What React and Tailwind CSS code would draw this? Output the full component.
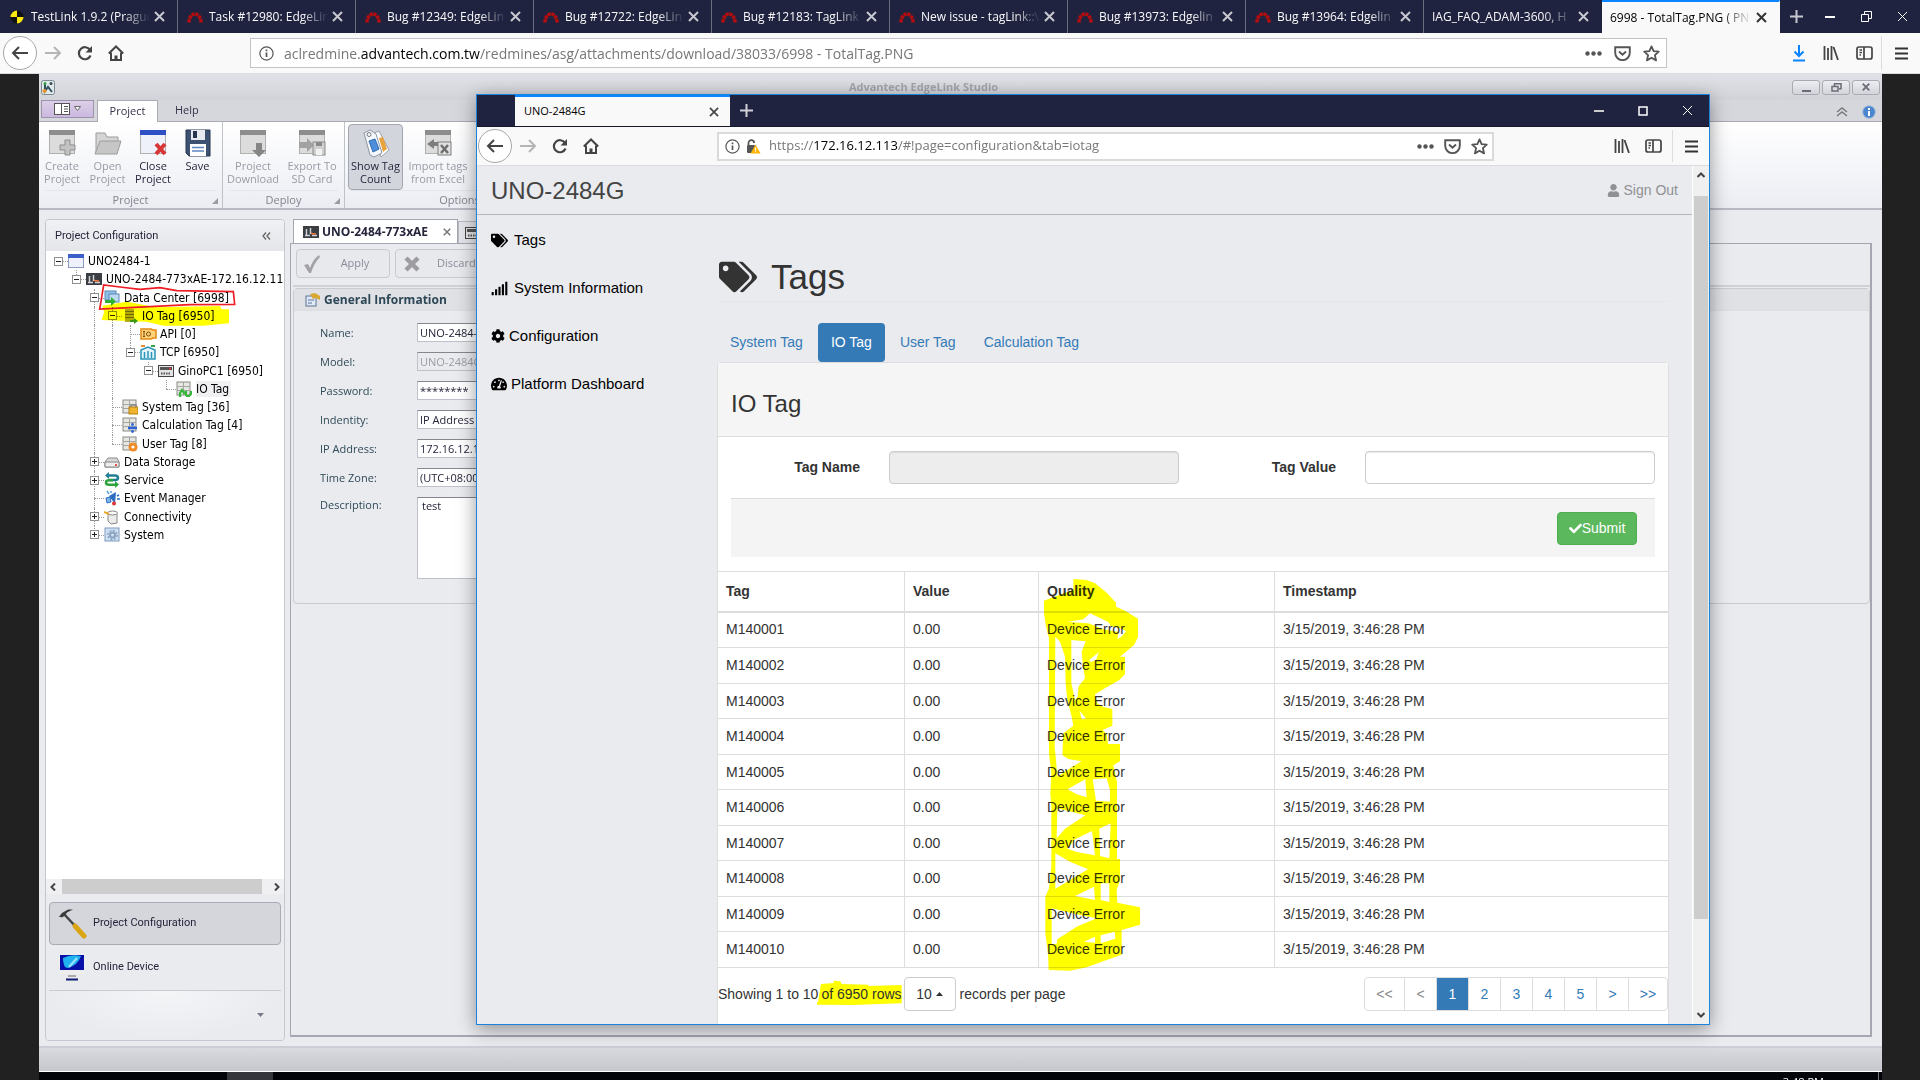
import { FaTags, FaSignal, FaCog, FaTachometerAlt, FaCheck, FaUser } from "react-icons/fa";

const WEB = "font-['Liberation_Sans',Arial,sans-serif]";
const SYS = "font-['Open_Sans','Noto_Sans',sans-serif]";
const PANEL = "font-['Roboto','Noto_Sans',sans-serif]";
const TREE = "font-['DejaVu_Sans_Condensed','DejaVu_Sans',sans-serif]";

/* ---------- browser chrome icons ---------- */
const Close = ({ s = 11, w = 2 }) => (
  <svg width={s} height={s} viewBox="0 0 11 11" fill="none" stroke="currentColor" strokeWidth={w}><path d="M1 1l9 9M10 1l-9 9" /></svg>
);
const Plus = () => (
  <svg width="15" height="15" viewBox="0 0 15 15" stroke="currentColor" strokeWidth="2"><path d="M7.5 1v13M1 7.5h13" /></svg>
);
const Redmine = () => (
  <svg width="16" height="12" viewBox="0 0 16 12" fill="none" stroke="#b80d0d" strokeWidth="3.500"><path d="M2 11.500a6 8.500 0 0 1 12 0" strokeDasharray="3.2 0.7" /></svg>
);
const Testlink = () => (
  <svg width="14" height="14" viewBox="0 0 14 14"><circle cx="7" cy="7" r="6.500" fill="#111" /><path d="M7 .5A6.500 6.500 0 0 0 .5 7H7zM7 13.500A6.500 6.500 0 0 0 13.500 7H7z" fill="#fde910" /></svg>
);
const Arrow = ({ flip }) => (
  <svg width="18" height="16" viewBox="0 0 18 16" fill="none" stroke="currentColor" strokeWidth="2" className={flip ? "rotate-180" : ""}><path d="M17 8H2M8 2L2 8l6 6" /></svg>
);
const Reload = () => (
  <svg width="16" height="16" viewBox="0 0 16 16" fill="none" stroke="currentColor" strokeWidth="2.200"><path d="M13.500 10.500A6 6 0 1 1 13 5" /><path d="M15 1v6.500H8.500z" fill="currentColor" stroke="none" /></svg>
);
const Home = () => (
  <svg width="16" height="16" viewBox="0 0 16 16" fill="none" stroke="currentColor" strokeWidth="2"><path d="M.8 8.500L8 1.500l7.200 7" /><path d="M3 7.500V15h10V7.500" /><path d="M8 15v-4.500" strokeWidth="3" /></svg>
);
const Info = () => (
  <svg width="15" height="15" viewBox="0 0 15 15" fill="none" stroke="currentColor" strokeWidth="1.200"><circle cx="7.500" cy="7.500" r="6.600" /><path d="M7.500 6.500v4.500M7.500 3.600v1.700" strokeWidth="1.700" /></svg>
);
const LockWarn = () => (
  <svg width="15" height="15" viewBox="0 0 15 15"><path d="M2.500 6V4a2.800 2.800 0 0 1 5.600 0" fill="none" stroke="#555" strokeWidth="1.800" /><rect x="1" y="6" width="8" height="8" rx="1" fill="#555" /><path d="M9.500 5.500l5 9h-10z" fill="#ffb300" /><path d="M9.500 8.500v3M9.500 12.200v1" stroke="#fff" strokeWidth="1.200" /></svg>
);
const Dots = () => (
  <svg width="17" height="5" viewBox="0 0 17 5" fill="currentColor"><circle cx="2.500" cy="2.500" r="2.200" /><circle cx="8.500" cy="2.500" r="2.200" /><circle cx="14.500" cy="2.500" r="2.200" /></svg>
);
const Pocket = () => (
  <svg width="17" height="15" viewBox="0 0 17 15" fill="none" stroke="currentColor" strokeWidth="1.900"><path d="M1.200 1.200h14.600v5.600a7.300 7.300 0 0 1-14.600 0z" /><path d="M5 5.500l3.500 3.300L12 5.500" /></svg>
);
const Star = () => (
  <svg width="17" height="17" viewBox="0 0 17 17" fill="none" stroke="currentColor" strokeWidth="1.800" strokeLinejoin="round"><path d="M8.500 1.400l2.100 4.800 5.200.5-3.900 3.500 1.200 5.200-4.600-2.700-4.600 2.700 1.200-5.200L1.200 6.700l5.200-.5z" /></svg>
);
const Library = () => (
  <svg width="16" height="14" viewBox="0 0 16 14" stroke="currentColor" strokeWidth="1.800"><path d="M1.500 0v14M5 2v12M8.500 0v14M10.500 1l4.500 13" /></svg>
);
const Sidebar = () => (
  <svg width="17" height="14" viewBox="0 0 17 14" fill="none" stroke="currentColor" strokeWidth="1.700"><rect x="1" y="1" width="15" height="12" rx="2" /><path d="M8 1v12M3.500 4h2.500M3.500 6.500h2.500M3.500 9h1.500" /></svg>
);
const Menu = () => (
  <svg width="13" height="13" viewBox="0 0 13 13" stroke="currentColor" strokeWidth="2"><path d="M0 1.500h13M0 6.500h13M0 11.500h13" /></svg>
);
const Download = () => (
  <svg width="14" height="17" viewBox="0 0 14 17" fill="none" stroke="#0a84ff" strokeWidth="2"><path d="M7 0v11M2.500 6.500L7 11l4.500-4.500M1 15.500h12" /></svg>
);

function IconButton({ label, className, children }) {
  return <button type="button" aria-label={label} className={`flex items-center justify-center ${className}`}>{children}</button>;
}

const TABS = ["TestLink 1.9.2 (Prague", "Task #12980: EdgeLin", "Bug #12349: EdgeLin", "Bug #12722: EdgeLin", "Bug #12183: TagLink", "New issue - tagLink::V", "Bug #13973: Edgelin", "Bug #13964: Edgelin", "IAG_FAQ_ADAM-3600, H", "6998 - TotalTag.PNG ( PN"];

function OuterTabs() {
  return (
    <div className="flex h-[33px] shrink-0 items-stretch bg-[#202340] text-[#f9f9fa]">
      {TABS.map((t, i) => {
        const active = i === TABS.length - 1;
        return (
          <div key={t} className={`flex w-[178px] shrink-0 items-center border-r pr-3 ${active ? "border-t-2 border-t-[#0a84ff] border-r-transparent bg-[#f9f9fa] pl-2 text-black" : i === TABS.length - 2 ? "border-r-transparent pl-2" : "border-r-[#6b6d80] pl-[7px]"}`}>
            {i < 8 && <span className="mr-1 flex w-5 shrink-0 justify-center">{i === 0 ? <Testlink /> : <Redmine />}</span>}
            <a href="#tab" className="min-w-0 flex-1 overflow-hidden text-[12px] leading-5 whitespace-nowrap [mask-image:linear-gradient(to_right,black_78%,transparent)]">{t}</a>
            <IconButton label="Close tab" className={`ml-1 ${active ? "text-[#333]" : "text-[#c8c8d0]"}`}><Close /></IconButton>
          </div>
        );
      })}
      <IconButton label="New tab" className="w-8 text-[#c8c8d0]"><Plus /></IconButton>
      <div className="ml-auto flex">
        <IconButton label="Minimize" className="w-9"><svg width="10" height="2"><path d="M0 1h10" stroke="#fff" strokeWidth="2" /></svg></IconButton>
        <IconButton label="Restore" className="w-9"><svg width="11" height="11" fill="none" stroke="#fff"><path d="M.5 3.500h7v7h-7zM3.500 3V.5h7v7H8" /></svg></IconButton>
        <IconButton label="Close" className="w-9"><Close s={11} w={1} /></IconButton>
      </div>
    </div>
  );
}

function NavButtons({ gap }) {
  return (
    <div className={`flex items-center text-[#444] ${gap}`}>
      <IconButton label="Back" className="h-[34px] w-[34px] rounded-full border border-[#a8a8a8] bg-white"><Arrow /></IconButton>
      <IconButton label="Forward" className="w-8 text-[#b5b5b5]"><Arrow flip /></IconButton>
      <IconButton label="Reload" className="w-[31px]"><Reload /></IconButton>
      <IconButton label="Home" className="w-[31px]"><Home /></IconButton>
    </div>
  );
}

function OuterNav() {
  return (
    <div className="flex h-[41px] shrink-0 items-center border-b border-[#dcdce0] bg-[#f9f9fa] pl-[3px] text-[#555]">
      <NavButtons gap="w-[247px]" />
      <div className="flex h-[30px] flex-1 items-center border border-[#c4c4c4] bg-white pr-1.5 pl-2">
        <Info />
        <a href="#url" className="ml-2.5 flex-1 text-[14px] text-[#777] whitespace-nowrap">aclredmine.<span className="text-black">advantech.com.tw</span>/redmines/asg/attachments/download/38033/6998 - TotalTag.PNG</a>
        <div className="flex items-center gap-3"><Dots /><Pocket /><Star /></div>
      </div>
      <div className="ml-[125px] flex items-center gap-[17px] text-[#444]"><Download /><Library /><Sidebar /></div>
      <div className="ml-2 flex h-[34px] w-[39px] items-center justify-center border-l border-[#ddd] text-[#333]"><Menu /></div>
    </div>
  );
}

/* ---------- ribbon icons ---------- */
const Win = ({ head = "#8d8d8d", body = "#dcdcdc", children }) => (
  <svg width="28" height="28" viewBox="0 0 28 28"><rect x="1.500" y="1.500" width="25" height="23" fill={body} stroke="#b0b0b0" /><rect x="1" y="1" width="26" height="5" fill={head} />{children}</svg>
);
const RIBBON = {
  create: <Win><path d="M17 11h5v5h5v5h-5v5h-5v-5h-5v-5h5z" fill="#c2c2c2" stroke="#8d8d8d" /></Win>,
  open: <svg width="28" height="28" viewBox="0 0 28 28"><path d="M2 24V4h9l2 4h11v5" fill="#d5d5d5" stroke="#9c9c9c" /><path d="M1 25l5-13h21l-4 13z" fill="#c6c6c6" stroke="#9c9c9c" /></svg>,
  close: <Win head="#2f4fc4" body="#eef1fa"><path d="M17 15l9 10M26 15l-9 10" stroke="#d93636" strokeWidth="4" /></Win>,
  save: <svg width="28" height="28" viewBox="0 0 28 28"><path d="M2 1h24v26H5l-3-3z" fill="#3d5273" stroke="#24344f" /><rect x="7" y="1" width="14" height="10" fill="#e6eaf0" /><rect x="9" y="2" width="4" height="7" fill="#26344d" /><rect x="6" y="15" width="16" height="12" fill="#fff" /><path d="M8 18.500h12M8 22h12" stroke="#5c86c0" strokeWidth="1.500" /></svg>,
  download: <Win><path d="M17 14h6v7h4l-7 7-7-7h4z" fill="#858585" /></Win>,
  exportSd: <Win><path d="M1 13h8V9l7 7-7 7v-4H1z" fill="#a2a2a2" /><rect x="15" y="13" width="12" height="13" fill="#d0d0d0" stroke="#8a8a8a" /><rect x="18" y="13" width="6" height="4" fill="#8a8a8a" /><rect x="18" y="20" width="6" height="6" fill="#f2f2f2" /></Win>,
  tag: <svg width="28" height="30" viewBox="0 0 28 30"><path d="M12 4l5-2 10 19-8 7z" fill="#fff" stroke="#9aa0aa" /><path d="M17 9l4-1 4 12-4 3z" fill="#eaa33c" /><path d="M2 4l6-3 6 4 6 19-8 4-4-2z" fill="#f4f7fb" stroke="#8b96a5" /><circle cx="7" cy="5.500" r="2" fill="none" stroke="#777" /><path d="M7 12l6-2 4 10-6 3z" fill="#4b8fdc" stroke="#2f69b0" /></svg>,
  excel: <Win><path d="M10 10v3h4v4h-4v3l-7-5z" fill="#7d7d7d" /><rect x="14" y="13" width="13" height="13" fill="#e0e0e0" stroke="#7d7d7d" /><path d="M17 16l7 8M24 16l-7 8" stroke="#6d6d6d" strokeWidth="2.500" /></Win>,
};

function RibbonItem({ icon, lines, off, pressed, w }) {
  return (
    <button type="button" className={`flex h-[66px] flex-col items-center pt-1 text-center text-[11px] leading-[13px] whitespace-nowrap ${w} ${off ? "text-[#9a9ba6]" : "text-[#25253c]"} ${pressed ? "rounded-sm border border-[#a3a5b0] bg-[#d3d5dc]" : "border border-transparent"}`}>
      <span className="flex h-[30px] items-start">{RIBBON[icon]}</span>
      <span>{lines.map((l) => <span key={l} className="block">{l}</span>)}</span>
    </button>
  );
}

function RibbonGroup({ title, w, pad, children }) {
  return (
    <div className={`relative flex shrink-0 flex-col border-r border-[#c0c2ca] ${w}`}>
      <div className={`flex pt-0.5 ${pad}`}>{children}</div>
      <div className="mx-1.5 border-t border-[#e4e5ea] pt-px text-center text-[11px] leading-4 text-[#82838e]">{title}</div>
      <span className="absolute right-1 bottom-1 border-[3px] border-transparent border-r-[#9b9ca5] border-b-[#9b9ca5]" />
    </div>
  );
}

function Ribbon() {
  return (
    <>
      <header className="flex h-[26px] shrink-0 items-center bg-gradient-to-b from-[#e0e2e7] to-[#d2d3d9] px-0.5">
        <svg width="14" height="15" viewBox="0 0 14 15"><rect x=".5" y=".5" width="13" height="14" rx="2" fill="#dfe9ea" stroke="#7b8b91" /><path d="M4 3v8l3-4 4 5" fill="none" stroke="#30505e" strokeWidth="2" /><circle cx="4" cy="3.500" r="1.500" fill="#3aa04a" /><circle cx="3.500" cy="11" r="2" fill="#e8912d" /><circle cx="10" cy="3.500" r="1.500" fill="#3c4d58" /></svg>
        <h1 className="flex-1 text-center text-[11px] font-bold text-[#a2a4ad]">Advantech EdgeLink Studio</h1>
        <div className="flex gap-0.5 text-[#6b6c77]">
          {["min", "res", "cls"].map((k) => (
            <IconButton key={k} label={k} className="h-[15px] w-[28px] rounded-[3px] border border-[#a9aab3] bg-gradient-to-b from-[#eceef2] to-[#d3d4da]">
              {k === "min" && <svg width="9" height="9"><path d="M0 8h9" stroke="currentColor" strokeWidth="2" /></svg>}
              {k === "res" && <svg width="11" height="9" fill="none" stroke="currentColor" strokeWidth="1.500"><path d="M3.500 3V.8h6.500v5H8M1 3.500h6v4.500H1z" /></svg>}
              {k === "cls" && <Close s={8} w={2.500} />}
            </IconButton>
          ))}
        </div>
      </header>
      <div className="flex h-[22px] shrink-0 items-end border-b border-[#a9abb5] bg-[#d6d7dd] pl-0.5 text-[11px] text-[#33344a]">
        <button type="button" aria-label="Application menu" className="mb-[3px] flex h-[18px] w-[53px] items-center justify-center gap-1 border border-[#9d93ae] bg-gradient-to-b from-[#dccfe8] to-[#cbb9df]">
          <svg width="16" height="12" viewBox="0 0 16 12"><rect x=".5" y=".5" width="15" height="11" fill="#fff" stroke="#555" /><path d="M7.500 0v12M10 3.500h4M10 6h4M10 8.500h4" stroke="#555" /></svg>
          <svg width="7" height="6"><path d="M.5.5h6l-3 4z" fill="#fff" stroke="#666" /></svg>
        </button>
        <button type="button" className="-mb-px ml-[3px] h-[22px] w-[61px] border-x border-t border-[#a9abb5] bg-white">Project</button>
        <button type="button" className="ml-[17px] h-[22px]">Help</button>
        <div className="mr-1.5 mb-0.5 ml-auto flex items-center gap-[14px]">
          <svg width="12" height="10" viewBox="0 0 12 10" fill="none" stroke="#777" strokeWidth="1.400"><path d="M1 5l5-4 5 4M1 9l5-4 5 4" /></svg>
          <svg width="14" height="14" viewBox="0 0 14 14"><circle cx="7" cy="7" r="6.300" fill="#4a86d0" stroke="#a9bedb" /><path d="M7 6v5M7 3v2" stroke="#fff" strokeWidth="2" /></svg>
        </div>
      </div>
      <div className="flex h-[88px] shrink-0 border-b-2 border-[#b9bbc4] bg-gradient-to-b from-white to-[#ebedf3]">
        <RibbonGroup title="Project" w="w-[184px]" pad="">
          <RibbonItem icon="create" lines={["Create", "Project"]} off w="w-[46px]" />
          <RibbonItem icon="open" lines={["Open", "Project"]} off w="w-[45px]" />
          <RibbonItem icon="close" lines={["Close", "Project"]} w="w-[46px]" />
          <RibbonItem icon="save" lines={["Save"]} w="w-[43px]" />
        </RibbonGroup>
        <RibbonGroup title="Deploy" w="w-[122px]" pad="">
          <RibbonItem icon="download" lines={["Project", "Download"]} off w="w-[60px]" />
          <RibbonItem icon="exportSd" lines={["Export To", "SD Card"]} off w="w-[58px]" />
        </RibbonGroup>
        <RibbonGroup title="Options" w="w-[230px]" pad="pl-[3px]">
          <RibbonItem icon="tag" lines={["Show Tag", "Count"]} pressed w="w-[55px]" />
          <RibbonItem icon="excel" lines={["Import tags", "from Excel"]} off w="w-[70px]" />
        </RibbonGroup>
      </div>
    </>
  );
}

/* ---------- project tree ---------- */
const Rack = ({ children }) => (
  <svg width="16" height="16" viewBox="0 0 16 16"><rect x="1" y="1" width="13" height="13" fill="#e6e6e2" stroke="#8b8b86" /><path d="M1 5.500h13M1 9.500h13M7.500 1v13" stroke="#a5a5a0" />{children}</svg>
);
const Screen = () => (
  <svg width="16" height="16" viewBox="0 0 16 16"><rect x="0" y="2" width="16" height="12" fill="#3a3d42" /><path d="M3.500 5v6M7.500 4v6M2 11.500h5M9 11.500h5" stroke="#cfd3d8" strokeWidth="1.500" /><path d="M8 9.500l5 .5" stroke="#f0783a" strokeWidth="1.500" /></svg>
);
const ICONS = {
  window: <svg width="16" height="16" viewBox="0 0 16 16"><rect x=".5" y="1.500" width="15" height="13" fill="#eef1fb" stroke="#8d9ac0" /><rect x="0" y="1" width="16" height="4" fill="#3e5fc8" /></svg>,
  screen: <Screen />,
  center: <svg width="16" height="16" viewBox="0 0 16 16"><rect x="1" y="1" width="11" height="9" fill="#8fc1ea" stroke="#5a88b3" /><rect x="5" y="4" width="10" height="8" fill="#bcd9f2" stroke="#5a88b3" /><path d="M1 10h6V7l5 4.500L7 16v-3H1z" fill="#2fb032" /></svg>,
  io: <svg width="16" height="16" viewBox="0 0 16 16"><path d="M3 1h9v13H3z" fill="#b5ab2a" /><path d="M3 3.500h9M3 6.500h9M3 9.500h9" stroke="#6e6a1a" /><path d="M8 12h4v-2l4 3-4 3v-2H8z" fill="#3d9a20" /></svg>,
  api: <svg width="17" height="16" viewBox="0 0 17 16"><path d="M1 3h10l2 1h3v8h-3l-2 1H1z" fill="#ffd27a" stroke="#e08a12" strokeWidth="1.500" /><path d="M4 5.500v5M3 5.500h2M3 10.500h2" stroke="#7a4a08" /><circle cx="8.500" cy="8" r="2" fill="none" stroke="#7a4a08" /></svg>,
  tcp: <svg width="16" height="16" viewBox="0 0 16 16"><path d="M1 6l7-3 7 3v9H1z" fill="#e3f4fb" stroke="#2a95b8" strokeWidth="1.500" /><path d="M4.500 8v6M8 7v7M11.500 8v6" stroke="#2a95b8" strokeWidth="1.500" /><path d="M1 2h4" stroke="#e8912d" strokeWidth="2" /><path d="M11 2h4" stroke="#3aa04a" strokeWidth="2" /></svg>,
  device: <svg width="16" height="16" viewBox="0 0 16 16"><rect x=".5" y="2.500" width="15" height="11" fill="#e4e4e4" stroke="#444" /><rect x="2" y="4" width="12" height="3" fill="#555" /><path d="M3 10.500h10" stroke="#555" strokeWidth="2" strokeDasharray="1.500 1" /><path d="M11 5.500h2" stroke="#e33" strokeWidth="1.500" /></svg>,
  iotag: <Rack><path d="M4 16v-4l2-3 2 3 2-1v3l2 2 3-3v-3" fill="none" stroke="#35b83a" strokeWidth="2.200" /></Rack>,
  sys: <Rack><rect x="7" y="8" width="9" height="7" fill="#efb52c" stroke="#b57f10" /><path d="M9 8V6h5v2" fill="none" stroke="#888" strokeWidth="1.500" /></Rack>,
  calc: <Rack><path d="M6 11h9" stroke="#2b62d9" strokeWidth="2.500" /><circle cx="10.500" cy="7.500" r="1.400" fill="#2b62d9" /><circle cx="10.500" cy="14.500" r="1.400" fill="#2b62d9" /></Rack>,
  user: <Rack><circle cx="11" cy="11" r="4.500" fill="#f08a24" /><circle cx="11" cy="11" r="1.600" fill="#fff" /></Rack>,
  disk: <svg width="16" height="16" viewBox="0 0 16 16"><path d="M1 8l3-4h9l2 4v5H1z" fill="#d8d8d8" stroke="#888" /><path d="M1 8h14v5H1z" fill="#ededed" stroke="#888" /><circle cx="12" cy="11" r="1" fill="#d22" /></svg>,
  service: <svg width="16" height="16" viewBox="0 0 16 16" fill="none" strokeWidth="2.500"><path d="M4 3.500h7q3 0 3 2.300t-3 2.300H5" stroke="#1f7f92" /><path d="M1 3.500L5 0v7z" fill="#1f7f92" /><path d="M12 12.800H5q-3 0-3-2.300t3-2.300h4" stroke="#2ba33a" /><path d="M15 12.500l-4-3.500v7z" fill="#2ba33a" /></svg>,
  event: <svg width="16" height="16" viewBox="0 0 16 16"><path d="M5 6l7-4-1 12z" fill="#2c6fc2" /><path d="M2 8l4-1 1 5-4 1z" fill="#7fb6e8" stroke="#2c6fc2" /><path d="M3 1l2 3M7 1v2" stroke="#5aa7e0" strokeWidth="1.500" /><circle cx="10" cy="13.500" r="2" fill="#d33" /><path d="M13 6l2-1M13 9h3" stroke="#2c6fc2" strokeWidth="1.500" /></svg>,
  conn: <svg width="16" height="16" viewBox="0 0 16 16"><path d="M4 4h9v10l-6 1-3-3z" fill="#ececec" stroke="#888" /><ellipse cx="8.500" cy="4" rx="5" ry="2" fill="#fafafa" stroke="#888" /><path d="M0 3l5 2" stroke="#e8a82d" strokeWidth="2" /></svg>,
  system: <svg width="16" height="16" viewBox="0 0 16 16"><rect x="1" y="1" width="14" height="13" fill="#cfe0f2" stroke="#7d9bbd" /><circle cx="8.500" cy="8" r="2.500" fill="none" stroke="#8aa3c0" strokeWidth="2" /><circle cx="8.500" cy="8" r="4.500" fill="none" stroke="#8aa3c0" strokeWidth="1.500" strokeDasharray="2 1.500" /></svg>,
};

/* [ancestor guides: "v" draws a line, " " leaves a gap; toggle mark; icon; label; last child] */
const TREE_ROWS = [
  ["", "-", "window", "UNO2484-1", true],
  [" ", "-", "screen", "UNO-2484-773xAE-172.16.12.113", true],
  ["  ", "-", "center", "Data Center [6998]", false],
  ["  v", "-", "io", "IO Tag [6950]", false],
  ["  vv", "", "api", "API [0]", false],
  ["  vv", "-", "tcp", "TCP [6950]", true],
  ["  vv ", "-", "device", "GinoPC1 [6950]", true],
  ["  vv  ", "", "iotag", "IO Tag", true],
  ["  v", "", "sys", "System Tag [36]", false],
  ["  v", "", "calc", "Calculation Tag [4]", false],
  ["  v", "", "user", "User Tag [8]", true],
  ["  ", "+", "disk", "Data Storage", false],
  ["  ", "+", "service", "Service", false],
  ["  ", "", "event", "Event Manager", false],
  ["  ", "+", "conn", "Connectivity", false],
  ["  ", "+", "system", "System", true],
];

function TreeRow({ row }) {
  const [guides, mark, icon, label, last] = row;
  return (
    <li className="flex items-center">
      {guides.split("").map((g, i) => (
        <span key={i} className="flex w-[18px] shrink-0 justify-center self-stretch">{g === "v" && <span className="border-l border-dotted border-[#9a9a9a]" />}</span>
      ))}
      <span className="relative flex w-[19px] shrink-0 items-center justify-center self-stretch">
        {guides !== "" && <span className={`absolute top-0 left-[9px] border-l border-dotted border-[#9a9a9a] ${last ? "h-1/2" : "h-full"}`} />}
        <span className="absolute top-1/2 right-0 left-[9px] border-t border-dotted border-[#9a9a9a]" />
        {mark && (
          <button type="button" aria-label={`Toggle ${label}`} className="relative flex h-[9px] w-[9px] items-center justify-center border border-[#8f8f8f] bg-white">
            <svg width="5" height="5" stroke="#222"><path d={mark === "+" ? "M0 2.500h5M2.500 0v5" : "M0 2.500h5"} /></svg>
          </button>
        )}
      </span>
      <span className="flex w-[20px] shrink-0">{ICONS[icon]}</span>
      <a href="#node" className={`whitespace-nowrap ${icon === "iotag" ? "bg-[#f0f0f2] pr-0.5" : ""}`}>{label}</a>
    </li>
  );
}

function ProjectPanel() {
  return (
    <aside className={`flex w-[240px] shrink-0 flex-col overflow-hidden rounded-sm border border-[#c5c7cf] text-[11px] text-[#25253c] ${PANEL}`}>
      <div className="flex h-[31px] shrink-0 items-center justify-between bg-gradient-to-b from-[#f0f1f4] to-[#e5e6ea] pr-[13px] pl-[9px]">
        <h2 className="pt-0.5">Project Configuration</h2>
        <svg width="9" height="8" viewBox="0 0 9 8" fill="none" stroke="#666" strokeWidth="1.300"><path d="M4 .5L1 4l3 3.500M8 .5L5 4l3 3.500" /></svg>
      </div>
      <div className="relative flex-1 overflow-hidden bg-white pt-px pl-[3px]">
        <ul className={`grid h-[292px] auto-rows-fr text-[12px] leading-4 text-black ${TREE}`}>{TREE_ROWS.map((r) => <TreeRow key={r[3] + r[2]} row={r} />)}</ul>
        <svg className="pointer-events-none absolute top-0 left-0 mix-blend-multiply" width="240" height="120" viewBox="48 123 720 360">
          <path d="M217 287L290 275 380 292 570 288 575 298H597V340L520 347H400L350 335 215 330 222 306z" fill="#ffff00" />
          <path d="M221 225L215 262 209 297 480 284 614 283 610 245 440 242 390 233 330 238 270 231z" fill="none" stroke="#ee1c24" strokeWidth="5" />
        </svg>
      </div>
      <div className="flex h-[15px] shrink-0 items-center bg-[#f0f0f2] px-1">
        <svg width="6" height="8" viewBox="0 0 6 8" fill="none" stroke="#444" strokeWidth="2"><path d="M5 .5L1.500 4 5 7.500" /></svg>
        <span className="mr-3 ml-1.5 h-full flex-1 bg-[#cdcdcd]" />
        <svg width="6" height="8" viewBox="0 0 6 8" fill="none" stroke="#444" strokeWidth="2"><path d="M1 .5L4.500 4 1 7.500" /></svg>
      </div>
      <button type="button" className="mx-[3px] mt-2 flex h-[43px] shrink-0 items-center gap-1.5 rounded-sm border border-[#a9abb5] bg-[#d5d6dc] pl-2">
        <svg width="29" height="30" viewBox="0 0 29 30"><path d="M6 5l12 13" stroke="#444" strokeWidth="2.500" /><path d="M17 17l9 10" stroke="#d9a514" strokeWidth="5" strokeLinecap="round" /><path d="M0 9l4-5 6-3.500h5l-6 3-2 3-3 2-3-1z" fill="#3c3c3c" /></svg>
        Project Configuration
      </button>
      <button type="button" className="mx-[3px] flex h-[46px] shrink-0 items-center gap-2 border-b border-[#c9cbd2] pl-2.5">
        <svg width="26" height="27" viewBox="0 0 26 27"><rect width="26" height="20" fill="#eee" /><rect x="1" y="1" width="24" height="15" fill="#0610a8" /><path d="M4 4q8-4 18-2-3 9-13 12Q4 14 4 4z" fill="#1fb2ee" /><path d="M10 13l8-9" stroke="#9be4ff" strokeWidth="2" /><path d="M9 22h8" stroke="#aaa" strokeWidth="2" /><path d="M7 25.500h12" stroke="#101a70" strokeWidth="2" /></svg>
        Online Device
      </button>
      <div className="flex h-[49px] shrink-0 justify-end bg-radial-[at_50%_0%] from-[#f4f5f7] to-[#eaebef] to-70% pt-[22px] pr-[20px]">
        <svg width="7" height="4"><path d="M0 0h7L3.500 4z" fill="#777a88" /></svg>
      </div>
    </aside>
  );
}

/* ---------- studio document ---------- */
const FIELDS = [
  ["Name:", "UNO-2484-773xAE"],
  ["Model:", "UNO-2484G-7731AE", true],
  ["Password:", "********"],
  ["Indentity:", "IP Address"],
  ["IP Address:", "172.16.12.113"],
  ["Time Zone:", "(UTC+08:00) Beijing"],
];
const BOX = "w-[300px] border border-[#bfc1ca] border-t-[#85878f] px-0.5";

function StudioDocument() {
  return (
    <section className="flex min-w-0 flex-1 flex-col pr-[10px] text-[11px]">
      <div className="flex h-6 shrink-0 items-end pl-[3px]">
        <button type="button" className="-mb-px flex h-[25px] w-[165px] items-center border border-b-0 border-[#a4a6b1] bg-white pl-[9px] font-bold text-[#25253c]">
          <Screen /><span className="ml-[3px] flex-1 text-left text-[12px]">UNO-2484-773xAE</span><span className="mr-1.5 text-[#777]"><Close s={8} w={2} /></span>
        </button>
        <button type="button" aria-label="GinoPC1" className="flex h-[22px] w-[100px] items-center border border-b-0 border-[#b8bac4] bg-[#e4e5ea] pl-1.5">{ICONS.device}</button>
      </div>
      <div className="flex-1 border border-[#a4a6b1] border-r-2 border-b-2 py-0.5 pl-0.5">
        <div className="flex h-[41px] gap-[5px] border-b-2 border-[#cfd1d6] pt-[3px] pl-[3px] text-[#8b8c98]">
          <button type="button" disabled className="flex h-[29px] w-[94px] items-center rounded-sm border border-[#c8cad0] bg-[#e8e9ed] pl-1.5">
            <svg width="18" height="18" viewBox="0 0 18 18"><path d="M1 10l4-1 2 4Q10 4 16 0l1 2Q11 8 8 18H6z" fill="#a3a3a6" /></svg>
            <span className="flex-1 text-center">Apply</span>
          </button>
          <button type="button" disabled className="flex h-[29px] w-[94px] items-center gap-[17px] rounded-sm border border-[#c8cad0] bg-[#e8e9ed] pl-2">
            <svg width="16" height="16" viewBox="0 0 16 16"><path d="M2 2l12 12M14 2L2 14" stroke="#9d9da1" strokeWidth="4.500" /></svg>
            Discard
          </button>
        </div>
        <form className="mt-px rounded-sm border border-[#c9cbd1]" onSubmit={(e) => e.preventDefault()}>
          <h2 className="flex h-[22px] items-center gap-1 border-b border-[#dcdde1] bg-[#e0e1e5] pl-[11px] text-[12px] font-bold text-[#2d4756]">
            <svg width="15" height="14" viewBox="0 0 15 14"><rect x="1" y="3" width="10" height="10" fill="#dfe9f7" stroke="#5b7294" /><path d="M3 7h6M3 10h4" stroke="#5b7294" /><path d="M5 1l5-1 5 3v4l-4-2-3 1z" fill="#d9a832" /></svg>
            General Information
          </h2>
          <div className="flex flex-col gap-2.5 pt-3 pb-6 pl-[26px] text-[#2f4a58]">
            {FIELDS.map(([l, v, off]) => (
              <label key={l} className="flex h-[19px] items-center"><span className="w-[97px] leading-4">{l}</span><input defaultValue={v} disabled={off} className={`h-[19px] ${BOX} ${off ? "bg-[#eaebef] text-[#9b9ca6]" : "bg-white text-[#25253c]"}`} /></label>
            ))}
            <label className="flex items-start"><span className="w-[97px] leading-4">Description:</span><textarea defaultValue="test" className={`h-[82px] resize-none pl-1 leading-4 text-[#25253c] ${BOX} bg-white`} /></label>
          </div>
        </form>
      </div>
    </section>
  );
}

/* ---------- device web page ---------- */
const NAV = [[FaTags, "Tags", "gap-1.5", 17], [FaSignal, "System Information", "gap-1.5", 17], [FaCog, "Configuration", "gap-1", 14], [FaTachometerAlt, "Platform Dashboard", "gap-1", 16]];
const ROWS = Array.from({ length: 10 }, (_, i) => `M1400${String(i + 1).padStart(2, "0")}`);
const PAGES = [["<<", "w-[39px] text-[#888]"], ["<", "w-8 text-[#888]"], ["1", "w-8 bg-[#337ab7] text-white"], ["2", "w-8"], ["3", "w-8"], ["4", "w-8"], ["5", "w-8"], [">", "w-8"], [">>", "w-[39px]"]];
const INPUT = "h-[33px] min-w-0 flex-1 rounded border border-[#ccc] px-3 shadow-[inset_0_1px_1px_rgba(0,0,0,0.075)]";

function Scribble() {
  return (
    <svg className="pointer-events-none absolute -top-[11px] left-[263px] mix-blend-multiply" width="240" height="440" viewBox="0 0 720 1320" fill="#ffff00" fillRule="evenodd">
      <path d="M280 57L320 60 345 70 380 98 408 128V140L435 152 474 176V232L462 255 420 290H435V342L418 360 380 382 345 403 352 430 370 441 397 447V497L368 510 380 522 384 552H420V604L400 616 411 665V897H420V960L410 990 412 1028 480 1042V1094L425 1110V1184L380 1200 320 1222 270 1232 206 1230 204 1180 196 1120V1010L207 985 214 920V740L211 700 214 640 207 580V235L198 200 192 160V122L210 115 280 90zM262 186L310 178 330 160 385 186 392 198 425 206 438 214 424 230 412 238 416 216 370 208 325 190zM226 230L240 245 255 290 257 370 262 420 275 470 280 497 250 520 247 585 265 597 305 604 270 625 232 650 228 600 224 560zM274 240L317 244 305 275 308 310 315 355 295 380 293 410 285 420 274 370zM328 300L357 276 348 300 332 306zM298 452L318 475 306 478zM338 658L380 655 390 690V725L348 722zM262 688L316 658 320 712 290 703zM232 745L316 766 255 806 230 835zM285 838L336 813 345 886 290 876 262 866zM358 806L392 790 388 895 360 888zM226 880L270 905 324 928 290 948 226 986zM285 1008L342 980 345 1020zM362 970H388V1026L362 1020zM215 1045L300 1065 350 1075 290 1100 232 1138 230 1152H215zM312 1145L345 1130V1148zM362 1126L404 1115 406 1136 362 1150z" />
    </svg>
  );
}

function DevicePage() {
  return (
    <div className={`flex min-h-0 flex-1 bg-[#eaebef] ${WEB}`}>
      <div className="flex min-w-0 flex-1 flex-col overflow-hidden">
        <header className="flex h-[49px] shrink-0 items-center justify-between border-b border-[#b4b5b9] pt-px pr-[14px] pl-[14px]">
          <a href="#home" className="text-[24px] leading-8 text-[#444]">UNO-2484G</a>
          <a href="#signout" className="flex items-center gap-1 text-[14px] text-[#909194]"><FaUser size={13} />Sign Out</a>
        </header>
        <div className="flex min-h-0 flex-1">
          <nav className="flex w-[240px] shrink-0 flex-col gap-6 pt-[13px] pl-[14px] text-[15px] leading-6 text-black">
            {NAV.map(([Icon, t, gap, s]) => <a key={t} href="#nav" className={`flex items-center ${gap}`}><Icon size={s} />{t}</a>)}
          </nav>
          <main className="mr-[23px] flex min-w-0 flex-1 flex-col text-[14px] text-[#333]">
            <h1 className="flex h-[87px] items-end gap-3.5 border-b border-[#e6e6e6] pl-0.5 text-[35px] leading-[48px]"><span className="flex h-12 items-center"><FaTags size={38} /></span>Tags</h1>
            <div className="mt-[21px] flex text-[#337ab7]">
              {["System Tag", "IO Tag", "User Tag", "Calculation Tag"].map((t, i) => (
                <button key={t} type="button" className={`mr-0.5 h-[39px] rounded px-[13px] ${i === 1 ? "bg-[#337ab7] text-white" : ""}`}>{t}</button>
              ))}
            </div>
            <section className="flex-1 rounded-t border-x border-t border-[#ddd] bg-white">
              <h2 className="flex h-[74px] items-center border-b border-[#ddd] bg-[#f5f5f5] pt-2 pl-[13px] text-[24px]">IO Tag</h2>
              <form className="px-[13px]" onSubmit={(e) => e.preventDefault()}>
                <div className="flex gap-7 pt-[14px]">
                  <label className="flex flex-1 items-center font-bold"><span className="mr-[29px] w-[129px] text-right">Tag Name</span><input disabled className={`${INPUT} bg-[#ededed]`} /></label>
                  <label className="flex flex-1 items-center font-bold"><span className="mr-[29px] w-[129px] text-right">Tag Value</span><input className={`${INPUT} bg-white`} /></label>
                </div>
                <div className="mt-[14px] flex h-[59px] items-center justify-end border-t border-[#ddd] bg-[#f4f4f4] pr-[18px]">
                  <button type="submit" className="flex h-[33px] w-20 items-center justify-center rounded border border-[#4cae4c] bg-[#5cb85c] text-white"><FaCheck size={13} />Submit</button>
                </div>
              </form>
              <div className="relative -mx-px mt-[14px]">
                <table className="h-[397px] w-full border-collapse border border-[#ddd] text-left">
                  <thead><tr className="h-10 border-b-2 border-[#ddd]">{["Tag", "Value", "Quality", "Timestamp"].map((h, i) => <th key={h} scope="col" className={`border-r border-[#ddd] px-2 ${["w-[187px]", "w-[134px]", "w-[236px]", ""][i]}`}>{h}</th>)}</tr></thead>
                  <tbody>{ROWS.map((r) => <tr key={r} className="border-b border-[#ddd]">{[r, "0.00", "Device Error", "3/15/2019, 3:46:28 PM"].map((c) => <td key={c} className="border-r border-[#ddd] px-2">{c}</td>)}</tr>)}</tbody>
                </table>
                <Scribble />
              </div>
              <div className="mt-[9px] flex items-center">
                <span>Showing 1 to 10 </span>
                <span className="relative ml-[3px]">
                  <svg className="absolute -top-1 -left-1" width="88" height="26" viewBox="0 0 264 78" fill="#ffff00"><path d="M12 12L50 9V2l20 2 4 8 80 2 0 4 100-3v55l-90 3-50 2-120-1-4-8H3z" /></svg>
                  <span className="relative">of 6950 rows</span>
                </span>
                <button type="button" aria-haspopup="listbox" className="relative ml-0.5 flex h-[34px] w-[52px] items-center justify-center gap-1 rounded border border-[#ccc] bg-white">10<svg width="7" height="4"><path d="M0 4h7L3.500 0z" fill="#333" /></svg></button>
                <span className="ml-1">records per page</span>
                <nav aria-label="Pages" className="ml-auto flex h-[34px] overflow-hidden rounded border border-[#ddd] text-[#337ab7]">
                  {PAGES.map(([p, c], i) => <a key={p} href="#page" className={`flex items-center justify-center ${i ? "border-l border-[#ddd]" : ""} ${c}`}>{p}</a>)}
                </nav>
              </div>
            </section>
          </main>
        </div>
      </div>
      <div className="flex w-[17px] shrink-0 flex-col items-center border-l border-white bg-[#f0f0f0] text-[#444]">
        <span className="flex h-[30px] items-center pb-3"><svg width="8" height="6" fill="none" stroke="currentColor" strokeWidth="2"><path d="M.5 5L4 1.500 7.500 5" /></svg></span>
        <span className="w-[14px] flex-1 bg-[#cdcdcd]" />
        <span className="flex h-[105px] items-end pb-1.5"><svg width="8" height="6" fill="none" stroke="currentColor" strokeWidth="2"><path d="M.5 1L4 4.500 7.500 1" /></svg></span>
      </div>
    </div>
  );
}

function DeviceWindow() {
  return (
    <div className="absolute top-[20px] right-[172px] bottom-[55px] left-[437px] flex flex-col border border-[#1a84dc] bg-[#f9f9fa] shadow-[0_4px_18px_rgba(0,0,0,0.4)]">
      <div className="flex h-8 shrink-0 border-b border-[#15172c] bg-[#202340] pl-[38px] text-[#d0d0d8]">
        <div className="flex w-[215px] items-center border-t-2 border-[#0a84ff] bg-[#f9f9fa] pr-[11px] pl-[9px] text-[11px] text-black"><a href="#tab" className="flex-1">UNO-2484G</a><IconButton label="Close tab" className="text-[#444]"><Close s={10} w={1.800} /></IconButton></div>
        <IconButton label="New tab" className="w-8"><Plus /></IconButton>
        <div className="ml-auto flex">
          <IconButton label="Minimize" className="w-11"><svg width="10" height="2"><path d="M0 1h10" stroke="#ccc" strokeWidth="2" /></svg></IconButton>
          <IconButton label="Maximize" className="w-11"><svg width="10" height="10"><rect x="1" y="1" width="8" height="8" fill="none" stroke="#fff" strokeWidth="1.500" /></svg></IconButton>
          <IconButton label="Close" className="w-11 text-white"><Close s={11} w={1} /></IconButton>
        </div>
      </div>
      <div className="flex h-[39px] shrink-0 items-center border-b border-[#dcdce0] pl-px text-[#555]">
        <NavButtons gap="w-[239px]" />
        <div className="flex h-[29px] flex-1 items-center border-2 border-[#dadada] bg-white pr-1 pl-1.5">
          <Info /><span className="ml-1.5"><LockWarn /></span>
          <a href="#url" className="ml-2 flex-1 text-[13px] text-[#777] whitespace-nowrap">https://<span className="text-black">172.16.12.113</span>/#!page=configuration&amp;tab=iotag</a>
          <div className="flex items-center gap-2.5"><Dots /><Pocket /><Star /></div>
        </div>
        <div className="ml-[120px] flex items-center gap-[15px] text-[#444]"><Library /><Sidebar /></div>
        <div className="ml-2.5 flex h-8 w-[37px] items-center justify-center border-l border-[#ddd] text-[#333]"><Menu /></div>
      </div>
      <DevicePage />
    </div>
  );
}

export default function App() {
  return (
    <div className={`flex h-screen flex-col overflow-hidden bg-[#212121] ${SYS}`}>
      <OuterTabs />
      <OuterNav />
      <div className="relative mr-[38px] ml-[39px] flex min-h-0 flex-1 flex-col bg-[#eaebef]">
        <Ribbon />
        <div className="flex min-h-0 flex-1 gap-[5px] pt-[9px] pl-[6px]">
          <div className="flex pb-[5px]"><ProjectPanel /></div>
          <div className="flex min-w-0 flex-1 pb-[9px]"><StudioDocument /></div>
        </div>
        <footer className="h-[26px] shrink-0 border-t-2 border-b border-t-[#cdced5] border-b-white bg-gradient-to-b from-[#d9dadf] to-[#c6c7ce]" />
        <div className="flex h-2 shrink-0 items-start overflow-hidden bg-[#02040a] pl-[188px] text-[11px] text-white">
          <span className="h-full w-[46px] bg-[#35363b]" />
          <span className="mt-0.5 mr-[54px] ml-auto leading-4">3:48 PM</span>
          <span className="mr-[3px] h-full border-l border-[#777]" />
        </div>
        <DeviceWindow />
      </div>
    </div>
  );
}
